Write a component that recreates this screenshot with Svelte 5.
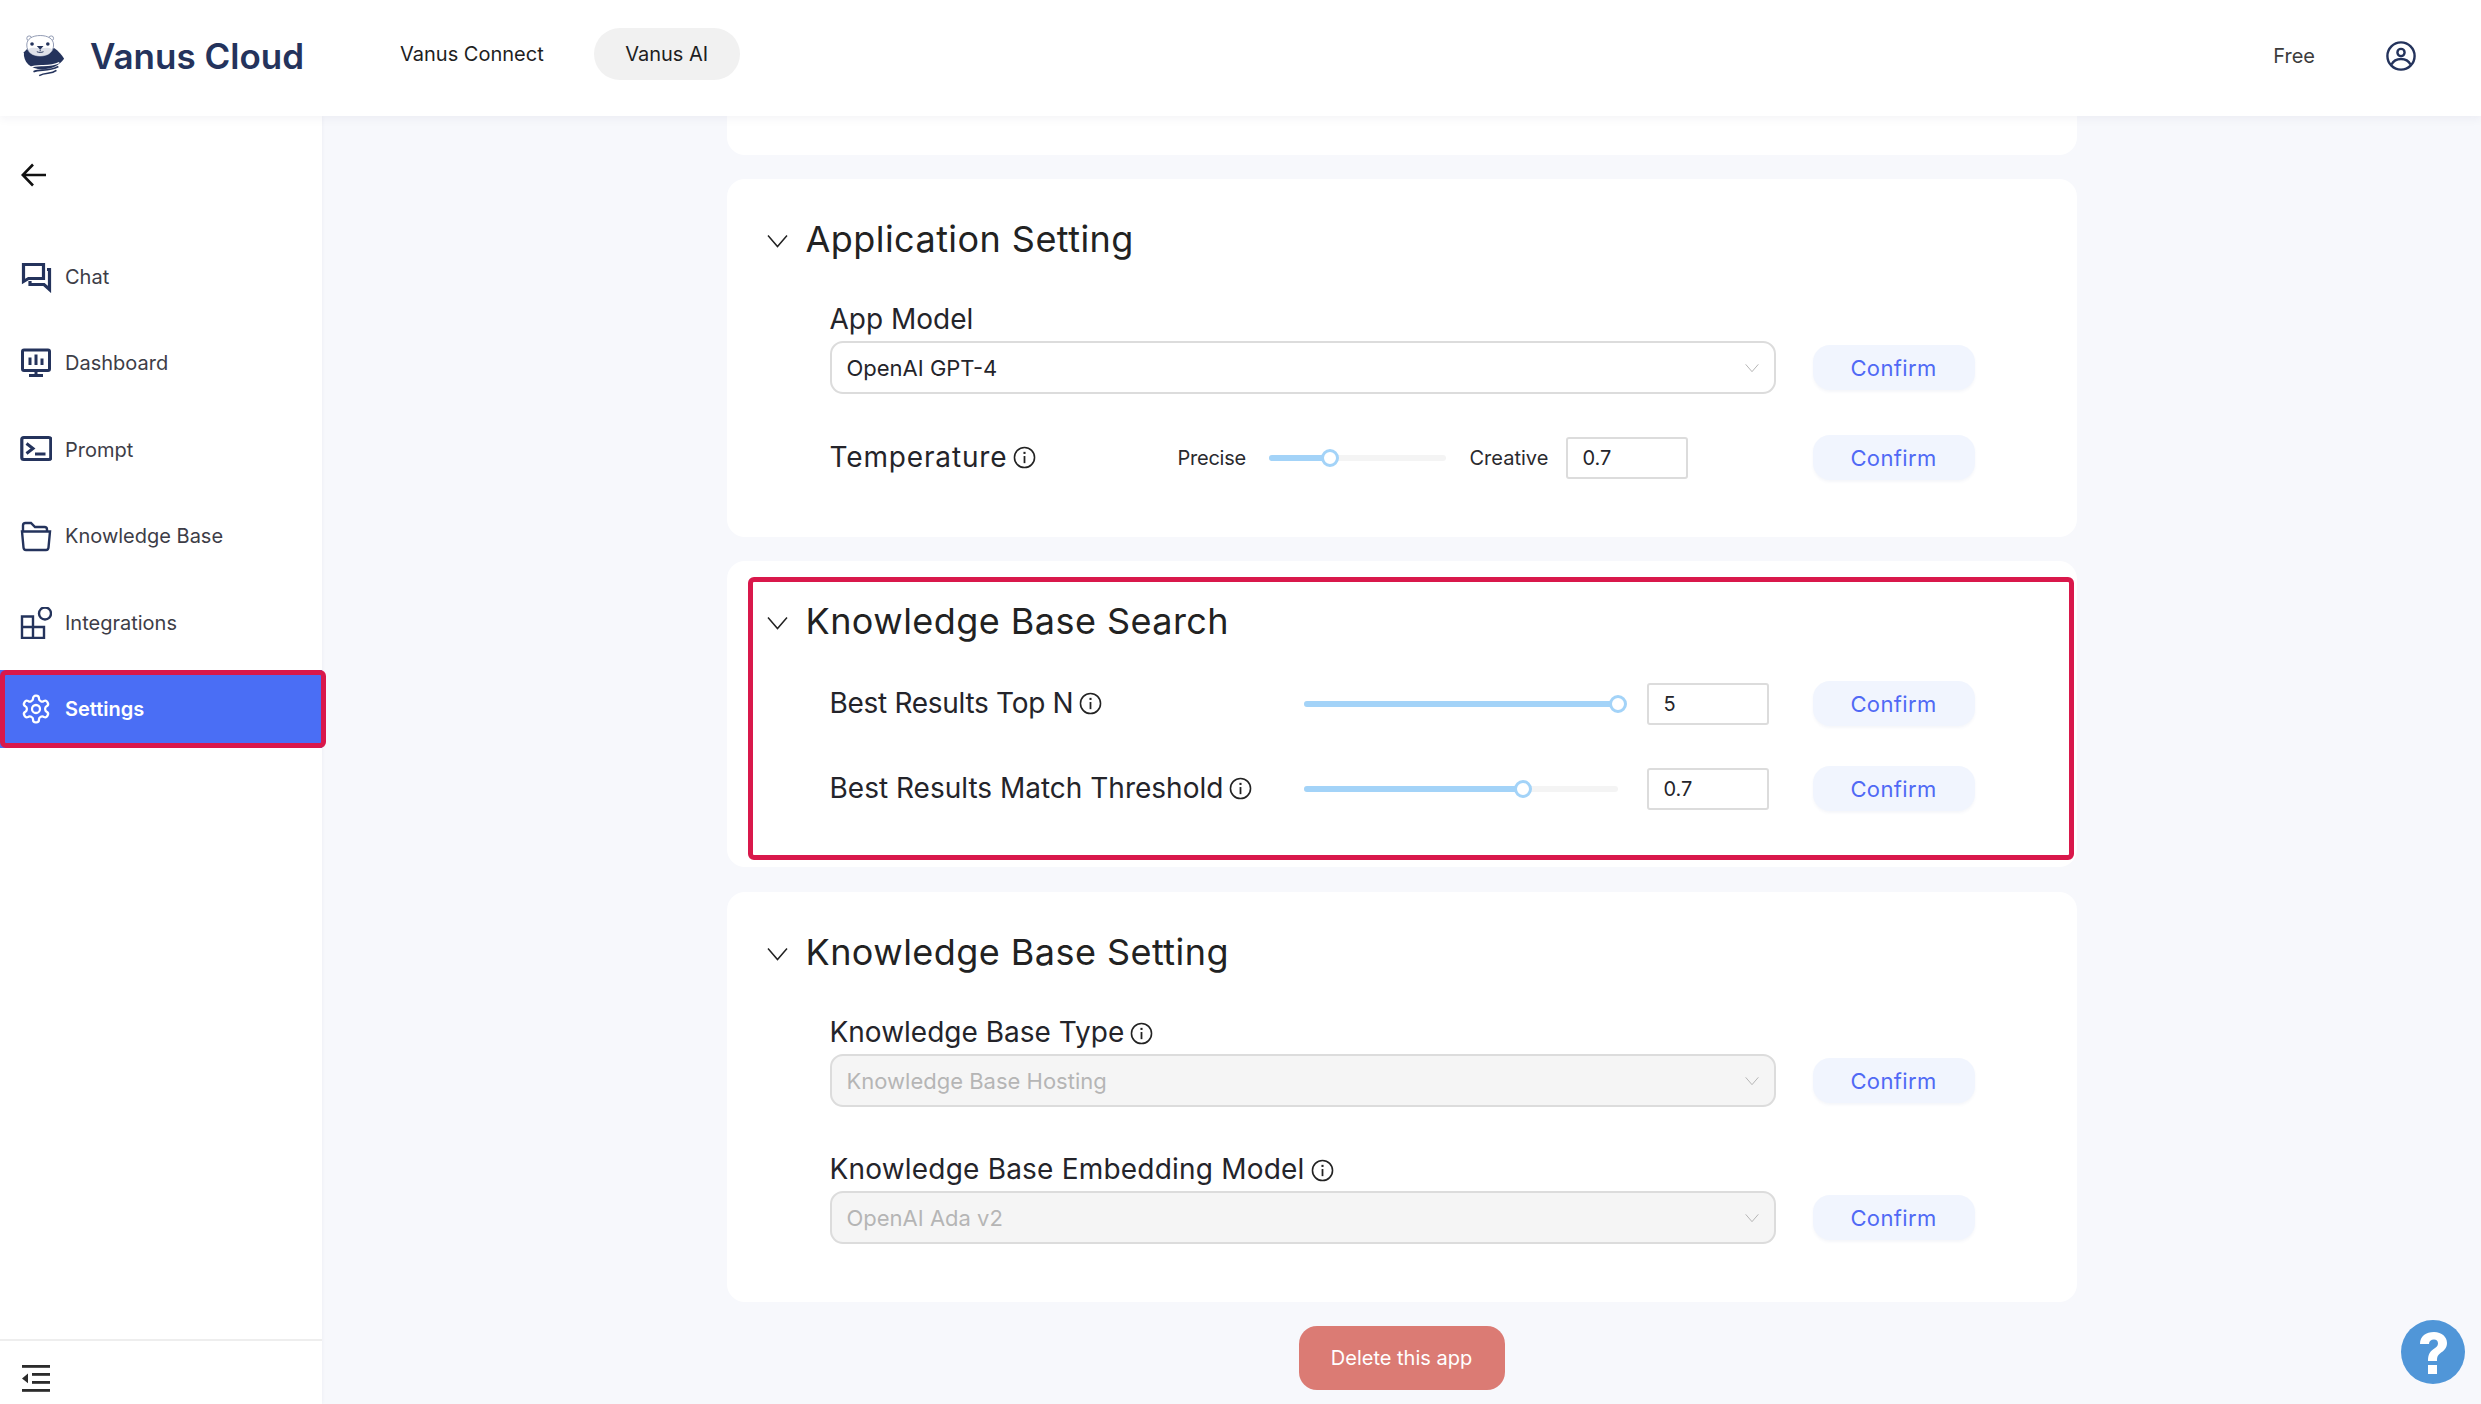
<script>
  const nav = [
    { label: 'Chat', icon: 'chat' },
    { label: 'Dashboard', icon: 'dash' },
    { label: 'Prompt', icon: 'prompt' },
    { label: 'Knowledge Base', icon: 'folder' },
    { label: 'Integrations', icon: 'integ' },
    { label: 'Settings', icon: 'gear', active: true }
  ];
</script>

{#snippet info()}
  <svg class="info" viewBox="0 0 22 22" fill="none" stroke="#222" stroke-width="1.5">
    <circle cx="11" cy="11" r="9.6" />
    <path d="M11 9.6V16.4" stroke-width="1.7" />
    <path d="M11 5.6V7.6" stroke-width="2" />
  </svg>
{/snippet}

{#snippet chevron(cls)}
  <svg class={cls} viewBox="0 0 21 14" fill="none" stroke="currentColor" stroke-width="1.5">
    <path d="M1 1.5L10.5 12.5L20 1.5" />
  </svg>
{/snippet}

{#snippet slider(width, pct)}
  <div class="slider" style="width:{width}px">
    <div class="fill" style="width:{pct}%"></div>
    <div class="thumb" style="left:{pct}%"></div>
  </div>
{/snippet}

{#snippet select(text, disabled)}
  <div class="select" class:disabled>
    <span>{text}</span>
    {@render chevron('sel-chev')}
  </div>
{/snippet}

{#snippet confirm()}
  <button class="confirm">Confirm</button>
{/snippet}

{#snippet sectionHead(title)}
  <div class="sec-head">
    {@render chevron('sec-chev')}
    <h2>{title}</h2>
  </div>
{/snippet}

<div class="page">
  <header>
    <div class="brand">
      <svg class="logo" viewBox="0 0 46 44">
        <path d="M2 18C1 28 9 36 21 36C32 36 40 31 44 25C42 21 38 17 34 14L6 14Z" fill="#24335c" />
        <circle cx="7.500" cy="3.500" r="2.500" fill="#fff" stroke="#8e97b0" stroke-width="1" />
        <circle cx="30.500" cy="3.500" r="2.500" fill="#fff" stroke="#8e97b0" stroke-width="1" />
        <path d="M5 10.500C5 4 11 0.600 19 0.600C27 0.600 33 4 33 10.500C33 18 27 22 19 22C11 22 5 18 5 10.500Z" fill="#fff" stroke="#8e97b0" stroke-width="1" />
        <path d="M6.500 15C10 12.500 15 13.500 19 14C23 13.500 28 12.500 31.500 15C29.500 20 25 22 19 22C13 22 8.500 20 6.500 15Z" fill="#dfe2ea" />
        <circle cx="10.500" cy="9.500" r="1.900" fill="#24335c" />
        <circle cx="27" cy="9.500" r="1.900" fill="#24335c" />
        <path d="M15.500 11.500H22.500L19 15.500Z" fill="#24335c" />
        <path d="M19 15.500V17M15.500 17.500C17.500 18.500 20.500 18.500 22.500 17.500" stroke="#24335c" stroke-width="1" fill="none" />
        <path d="M9 34C17 29.500 26 35 39 29" stroke="#fff" stroke-width="1.500" fill="none" />
        <path d="M12 38.500C19 35 27 39 38 33M18 42.500C25 38.500 30 41.500 36 37" stroke="#24335c" stroke-width="1.700" fill="none" />
      </svg>
      <span class="brand-name">Vanus Cloud</span>
    </div>
    <nav class="top-nav">
      <a href="#connect">Vanus Connect</a>
      <a href="#ai" class="on">Vanus AI</a>
    </nav>
    <div class="top-right">
      <span class="plan">Free</span>
      <svg class="user" viewBox="0 0 30 30" fill="none" stroke="#24335c" stroke-width="2.4">
        <circle cx="15" cy="15" r="13.6" />
        <circle cx="15" cy="11.5" r="3.6" />
        <path d="M5.5 23.5C7.5 19.5 11 18 15 18C19 18 22.5 19.5 24.5 23.5" />
      </svg>
    </div>
  </header>

  <div class="body">
    <aside>
      <div class="back">
        <svg viewBox="0 0 26 24" fill="none" stroke="#111" stroke-width="2.6">
          <path d="M25 12H2M12 1.5L1.8 12L12 22.5" />
        </svg>
      </div>
      <ul class="menu">
        {#each nav as item}
          <li class:active={item.active}>
            <svg viewBox="0 0 32 32" fill="none" stroke="currentColor" stroke-width="3">
              {#if item.icon === 'chat'}
                <path d="M3.500 3.500H23.500V17.500H8.500L3.500 20.500Z" stroke-width="3.200" />
                <path d="M27 8.500H29.500V28.500L24 23.500H10V20" stroke-width="3.200" />
              {:else if item.icon === 'dash'}
                <rect x="2.5" y="3" width="27" height="20.5" rx="1.5" />
                <path d="M10 10.5V18M16 7.5V18M22 11.5V18" />
                <path d="M16 23.5V28.5M9 28.5H23" />
              {:else if item.icon === 'prompt'}
                <rect x="1.800" y="3.500" width="29" height="22" rx="2" stroke-width="3.200" />
                <path d="M6.500 9.500L13 14.500L6.500 19.500" />
                <path d="M15 20H25.500" />
              {:else if item.icon === 'folder'}
                <path d="M3 11V5.5C3 4 4 3 5.5 3H11L15 7H24.5C26 7 27 8 27 9.5V11" stroke-width="2.4" />
                <path d="M2 11.5H30L28.5 27.5C28.4 29 27.5 30 26 30H6C4.5 30 3.6 29 3.5 27.5Z" stroke-width="2.4" />
              {:else if item.icon === 'integ'}
                <path d="M2 9.5H13V31H2ZM2 20H24V31H13" stroke-width="2.4" />
                <circle cx="25" cy="6.5" r="6" stroke-width="2.4" />
              {:else}
                <g transform="scale(1.333)" stroke-width="1.7">
                  <path d="M12.22 2h-.44a2 2 0 0 0-2 2v.18a2 2 0 0 1-1 1.73l-.43.25a2 2 0 0 1-2 0l-.15-.08a2 2 0 0 0-2.73.73l-.22.38a2 2 0 0 0 .73 2.73l.15.1a2 2 0 0 1 1 1.72v.51a2 2 0 0 1-1 1.74l-.15.09a2 2 0 0 0-.73 2.73l.22.38a2 2 0 0 0 2.73.73l.15-.08a2 2 0 0 1 2 0l.43.25a2 2 0 0 1 1 1.73V20a2 2 0 0 0 2 2h.44a2 2 0 0 0 2-2v-.18a2 2 0 0 1 1-1.73l.43-.25a2 2 0 0 1 2 0l.15.08a2 2 0 0 0 2.73-.73l.22-.39a2 2 0 0 0-.73-2.73l-.15-.08a2 2 0 0 1-1-1.74v-.5a2 2 0 0 1 1-1.74l.15-.09a2 2 0 0 0 .73-2.73l-.22-.38a2 2 0 0 0-2.73-.73l-.15.08a2 2 0 0 1-2 0l-.43-.25a2 2 0 0 1-1-1.73V4a2 2 0 0 0-2-2z" />
                  <circle cx="12" cy="12" r="3" />
                </g>
              {/if}
            </svg>
            <span>{item.label}</span>
          </li>
        {/each}
      </ul>
      <div class="collapse">
        <svg viewBox="0 0 28 27" fill="#2b2b2b">
          <rect x="0" y="0" width="28" height="2.8" />
          <rect x="0" y="24" width="28" height="2.8" />
          <rect x="10" y="8" width="18" height="2.8" />
          <rect x="10" y="16" width="18" height="2.8" />
          <path d="M0 13.4L6 8.5V18.3Z" />
        </svg>
      </div>
    </aside>

    <main>
      <section class="card stub"></section>

      <section class="card app">
        {@render sectionHead('Application Setting')}
        <div class="sec-body">
          <div class="row stacked">
            <div class="col">
              <div class="label">App Model</div>
              {@render select('OpenAI GPT-4', false)}
            </div>
            {@render confirm()}
          </div>
          <div class="row temp">
            <div class="col inline">
              <div class="label w-temp"><span class="ls-temp">Temperature</span> {@render info()}</div>
              <span class="hint precise">Precise</span>
              {@render slider(177, 35)}
              <span class="hint creative">Creative</span>
              <div class="num">0.7</div>
            </div>
            {@render confirm()}
          </div>
        </div>
      </section>

      <section class="card search">
        <div class="outline"></div>
        {@render sectionHead('Knowledge Base Search')}
        <div class="sec-body">
          <div class="row s1">
            <div class="col inline">
              <div class="label w-search"><span class="ls-top">Best Results Top N</span> {@render info()}</div>
              {@render slider(314, 100)}
              <div class="num gap">5</div>
            </div>
            {@render confirm()}
          </div>
          <div class="row s2">
            <div class="col inline">
              <div class="label w-search">Best Results Match Threshold {@render info()}</div>
              {@render slider(314, 70)}
              <div class="num gap">0.7</div>
            </div>
            {@render confirm()}
          </div>
        </div>
      </section>

      <section class="card kb">
        {@render sectionHead('Knowledge Base Setting')}
        <div class="sec-body">
          <div class="row stacked">
            <div class="col">
              <div class="label">Knowledge Base Type {@render info()}</div>
              {@render select('Knowledge Base Hosting', true)}
            </div>
            {@render confirm()}
          </div>
          <div class="row stacked k2">
            <div class="col">
              <div class="label"><span class="ls-embed">Knowledge Base Embedding Model</span> {@render info()}</div>
              {@render select('OpenAI Ada v2', true)}
            </div>
            {@render confirm()}
          </div>
        </div>
      </section>

      <button class="delete">Delete this app</button>
    </main>
  </div>

  <button class="help" aria-label="Help">
    <svg viewBox="0 0 64 64">
      <circle cx="32" cy="32" r="32" fill="#5096d8" />
      <path d="M19 24C19 16 25 12 33 12C41 12 46 17 46 23C46 29 42 31 39 33.500C36.500 35.500 36 37 36 41H27C27 35 28.500 32 32 29.500C35 27.500 37 26 37 23.500C37 21 35.500 19.500 33 19.500C30 19.500 28 21 28 24Z" fill="#fff" />
      <rect x="27" y="45" width="9" height="9" fill="#fff" />
    </svg>
  </button>
</div>

<style>
  :global(body) {
    margin: 0;
    background: #f7f8fc;
    font-family: Inter, "Noto Sans", sans-serif;
  }
  .page {
    position: relative;
    width: 2481px;
    height: 1404px;
    overflow: hidden;
    display: flex;
    flex-direction: column;
    color: #24242a;
  }
  header {
    position: relative;
    z-index: 2;
    flex: none;
    height: 116px;
    background: #fff;
    box-shadow: 0 2px 10px rgba(30, 40, 90, 0.06);
    display: flex;
    align-items: center;
  }
  .brand {
    display: flex;
    align-items: center;
    width: 400px;
    padding-left: 22px;
    box-sizing: border-box;
    gap: 24px;
  }
  .logo { width: 44px; height: 44px; flex: none; margin-top: -5px; }
  .brand-name {
    font-size: 35px;
    font-weight: 600;
    color: #24335c;
    white-space: nowrap;
    margin-top: -4px;
  }
  .top-nav {
    display: flex;
    align-items: center;
    gap: 50px;
    margin-top: -8px;
  }
  .top-nav a {
    font-size: 20px;
    color: #1e1e22;
    text-decoration: none;
    white-space: nowrap;
  }
  .top-nav a.on {
    background: #f1f1f1;
    height: 52px;
    width: 146px;
    border-radius: 26px;
    display: flex;
    align-items: center;
    justify-content: center;
  }
  .top-right {
    margin-left: auto;
    display: flex;
    align-items: center;
    gap: 71px;
    padding-right: 65px;
    margin-top: -4px;
  }
  .plan { font-size: 20px; color: #3c3c3c; margin-top: -1px; }
  .user { width: 30px; height: 30px; }

  .body {
    flex: 1;
    min-height: 0;
    display: flex;
  }
  aside {
    flex: none;
    width: 322px;
    background: #fff;
    display: flex;
    flex-direction: column;
    box-shadow: 1px 0 3px rgba(30, 40, 90, 0.03);
  }
  .back {
    height: 122px;
    display: flex;
    align-items: flex-end;
    padding: 0 0 51px 21px;
    box-sizing: border-box;
  }
  .back svg { width: 26px; height: 24px; }
  .menu {
    list-style: none;
    margin: 0;
    padding: 0;
    display: flex;
    flex-direction: column;
    gap: 8.4px;
    flex: 1;
  }
  .menu li {
    height: 78px;
    display: flex;
    align-items: center;
    gap: 13px;
    padding-left: 20px;
    color: #24335c;
    position: relative;
  }
  .menu li svg { width: 32px; height: 32px; flex: none; }
  .menu li span { font-size: 20px; color: #3d3d47; }
  .menu li.active {
    background: #4a6ef5;
    color: #fff;
  }
  .menu li.active span { color: #fff; font-weight: 600; }
  .menu li.active::after {
    content: "";
    position: absolute;
    left: 0;
    top: 0;
    width: 326px;
    height: 78px;
    box-sizing: border-box;
    border: 5px solid #d9184b;
    border-radius: 6px;
  }
  .collapse {
    flex: none;
    height: 65px;
    border-top: 2px solid #eeeeee;
    box-sizing: border-box;
    padding: 24px 0 0 22px;
  }
  .collapse svg { width: 28px; height: 27px; display: block; }

  main {
    flex: 1;
    min-width: 0;
    display: flex;
    flex-direction: column;
    align-items: center;
    gap: 24px;
  }
  .card {
    position: relative;
    width: 1350px;
    box-sizing: border-box;
    background: #fff;
    border-radius: 18px;
    padding: 36px 102px 0 40px;
  }
  .stub {
    height: 39px;
    padding: 0;
    border-radius: 0 0 18px 18px;
  }
  .app { height: 358px; }
  .search { height: 306px; }
  .kb { height: 410px; margin-top: 1px; }
  .outline {
    position: absolute;
    left: 21px;
    top: 16px;
    width: 1326px;
    height: 283px;
    box-sizing: border-box;
    border: 5px solid #d9184b;
    border-radius: 6px;
    pointer-events: none;
  }
  .sec-head {
    display: flex;
    align-items: center;
    gap: 18px;
    height: 48px;
  }
  .sec-chev { width: 21px; height: 14px; color: #222; flex: none; margin-top: 3px; }
  h2 {
    margin: 0;
    font-size: 36px;
    font-weight: 400;
    color: #222;
    line-height: 48px;
    white-space: nowrap;
    letter-spacing: 0.45px;
  }
  .sec-body {
    padding-left: 63px;
    display: flex;
    flex-direction: column;
  }
  .row {
    display: flex;
    align-items: center;
    gap: 37px;
  }
  .row.stacked { align-items: flex-end; margin-top: 38px; }
  .row.stacked .confirm { margin-bottom: 4px; }
  .row.temp { margin-top: 41px; }
  .row.s1 { margin-top: 36px; }
  .row.s2 { margin-top: 40px; }
  .row.k2 { margin-top: 44px; }
  .col { width: 946px; flex: none; }
  .col.inline { display: flex; align-items: center; }
  .label {
    font-size: 28px;
    line-height: 36px;
    height: 36px;
    margin-bottom: 4px;
    color: #24242a;
    display: flex;
    align-items: center;
    gap: 6px;
    white-space: nowrap;
  }
  .col.inline .label { margin-bottom: 0; margin-top: -2px; }
  .ls-temp { letter-spacing: 0.85px; }
  .ls-top { letter-spacing: -0.3px; }
  .ls-embed { letter-spacing: 0.2px; }
  .w-temp { width: 348px; flex: none; }
  .w-search { width: 474px; flex: none; }
  .info { width: 23px; height: 23px; flex: none; margin-top: 2px; }

  .select {
    height: 53px;
    box-sizing: border-box;
    border: 2px solid #dcdcdc;
    border-radius: 13px;
    display: flex;
    align-items: center;
    justify-content: space-between;
    padding: 0 15px;
    background: #fff;
    font-size: 22px;
    color: #24242a;
  }
  .select.disabled {
    background: #f5f5f5;
    color: #b5b5b5;
  }
  .sel-chev { width: 14px; height: 10px; color: #b5b5b5; }

  .confirm {
    flex: none;
    width: 162px;
    height: 45px;
    border: none;
    border-radius: 17px;
    background: #f1f5fe;
    color: #5069f5;
    font-family: inherit;
    font-size: 22px;
    letter-spacing: 0.35px;
    box-shadow: 0 2px 3px rgba(60, 80, 160, 0.05);
    padding: 0;
  }
  .hint { font-size: 20px; color: #2a2a2e; white-space: nowrap; }
  .precise { width: 66px; margin-right: 25px; flex: none; letter-spacing: -0.25px; }
  .creative { width: 80px; margin-left: 24px; margin-right: 16px; flex: none; }

  .slider {
    position: relative;
    height: 6px;
    flex: none;
    background: #f4f4f4;
    border-radius: 3px;
  }
  .fill {
    height: 100%;
    background: #a3d3f8;
    border-radius: 3px;
  }
  .thumb {
    position: absolute;
    top: 50%;
    width: 18px;
    height: 18px;
    box-sizing: border-box;
    background: #fff;
    border: 3px solid #a3d3f8;
    border-radius: 50%;
    transform: translate(-50%, -50%);
  }
  .num {
    width: 122px;
    height: 42px;
    box-sizing: border-box;
    border: 2px solid #dcdcdc;
    border-radius: 3px;
    padding-left: 15px;
    display: flex;
    align-items: center;
    font-size: 20px;
    color: #24242a;
    background: #fff;
    flex: none;
  }
  .num.gap { margin-left: 29px; }

  .delete {
    flex: none;
    width: 206px;
    height: 64px;
    border: none;
    border-radius: 18px;
    background: #db7b74;
    color: #fff;
    font-family: inherit;
    font-size: 20px;
    padding: 0;
  }
  .help {
    position: absolute;
    left: 2401px;
    top: 1320px;
    width: 64px;
    height: 64px;
    padding: 0;
    border: none;
    background: none;
  }
  .help svg { width: 64px; height: 64px; display: block; }
</style>
